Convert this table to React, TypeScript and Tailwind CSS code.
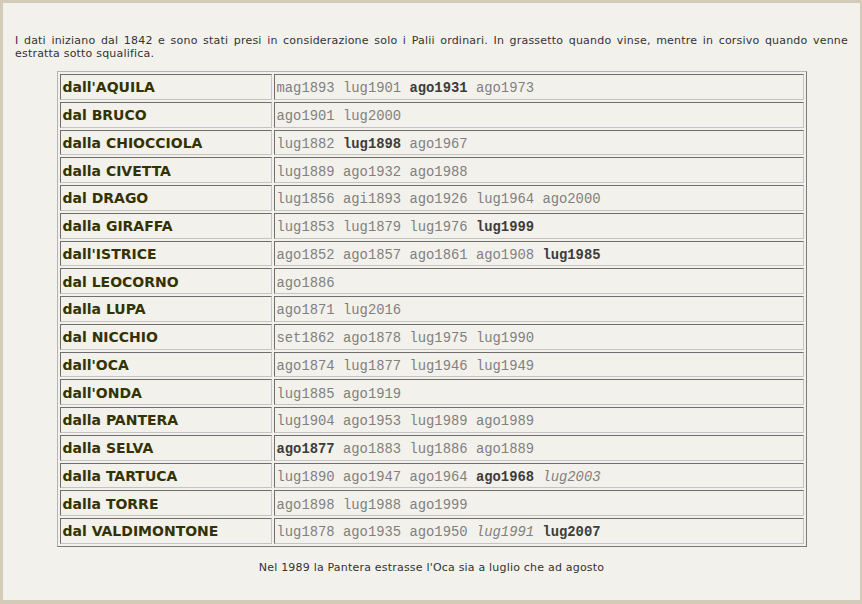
import React from "react";

type Seg = { t: string; b?: boolean; i?: boolean };
const p = (s: string): Seg[] =>
  s.split(" ").map((w) => {
    if (w.startsWith("*")) return { t: w.slice(1), b: true };
    if (w.startsWith("_")) return { t: w.slice(1), i: true };
    return { t: w };
  });

const rows: [string, Seg[]][] = [
  ["dall'AQUILA", p("mag1893 lug1901 *ago1931 ago1973")],
  ["dal BRUCO", p("ago1901 lug2000")],
  ["dalla CHIOCCIOLA", p("lug1882 *lug1898 ago1967")],
  ["dalla CIVETTA", p("lug1889 ago1932 ago1988")],
  ["dal DRAGO", p("lug1856 agi1893 ago1926 lug1964 ago2000")],
  ["dalla GIRAFFA", p("lug1853 lug1879 lug1976 *lug1999")],
  ["dall'ISTRICE", p("ago1852 ago1857 ago1861 ago1908 *lug1985")],
  ["dal LEOCORNO", p("ago1886")],
  ["dalla LUPA", p("ago1871 lug2016")],
  ["dal NICCHIO", p("set1862 ago1878 lug1975 lug1990")],
  ["dall'OCA", p("ago1874 lug1877 lug1946 lug1949")],
  ["dall'ONDA", p("lug1885 ago1919")],
  ["dalla PANTERA", p("lug1904 ago1953 lug1989 ago1989")],
  ["dalla SELVA", p("*ago1877 ago1883 lug1886 ago1889")],
  ["dalla TARTUCA", p("lug1890 ago1947 ago1964 *ago1968 _lug2003")],
  ["dalla TORRE", p("ago1898 lug1988 ago1999")],
  ["dal VALDIMONTONE", p("lug1878 ago1935 ago1950 _lug1991 *lug2007")],
];

export default function App() {
  return (
    <div className="w-[862px] h-[604px] bg-[#d3cbb8] pt-[3px] pl-[3px] pr-[2px] pb-[4px]">
      <div className="h-full bg-[#f3f1eb] pt-[31px] px-[12px] font-['DejaVu_Sans',Verdana,sans-serif] text-[#333]">
        <p className="text-[11px] leading-[13px] tracking-[0.2px] text-justify">
          I dati iniziano dal 1842 e sono stati presi in considerazione solo i Palii ordinari. In grassetto quando vinse, mentre in corsivo quando venne estratta sotto squalifica.
        </p>
        <table className="mx-auto mt-[11px] w-[750px] border-separate border-spacing-[2px] border border-t-[#b4b4b4] border-l-[#b4b4b4] border-b-[#7a7a7a] border-r-[#7a7a7a]">
          <tbody>
            {rows.map(([name, segs]) => (
              <tr key={name}>
                <td className="w-[212px] h-[25.75px] p-0 pl-[2px] pt-[1px] border border-t-[#6e6e6e] border-l-[#6e6e6e] border-b-[#c4c4c4] border-r-[#c4c4c4] text-[14px] font-bold text-[#333300] leading-[22px] align-middle">
                  {name}
                </td>
                <td className="h-[25.75px] p-0 pl-[2px] pt-[3px] border border-t-[#6e6e6e] border-l-[#6e6e6e] border-b-[#c4c4c4] border-r-[#c4c4c4] font-['Liberation_Mono','Courier_New',monospace] text-[13.85px] text-[#808080] leading-[20px] align-middle whitespace-pre">
                  {segs.map((s, i) => (
                    <React.Fragment key={i}>
                      {i > 0 ? " " : ""}
                      {s.b ? (
                        <b className="font-bold text-[#3c3c3c]">{s.t}</b>
                      ) : s.i ? (
                        <i className="italic">{s.t}</i>
                      ) : (
                        s.t
                      )}
                    </React.Fragment>
                  ))}
                </td>
              </tr>
            ))}
          </tbody>
        </table>
        <p className="mt-[14px] text-center text-[11px] leading-[13px] tracking-[0.2px]">
          Nel 1989 la Pantera estrasse l'Oca sia a luglio che ad agosto
        </p>
      </div>
    </div>
  );
}
